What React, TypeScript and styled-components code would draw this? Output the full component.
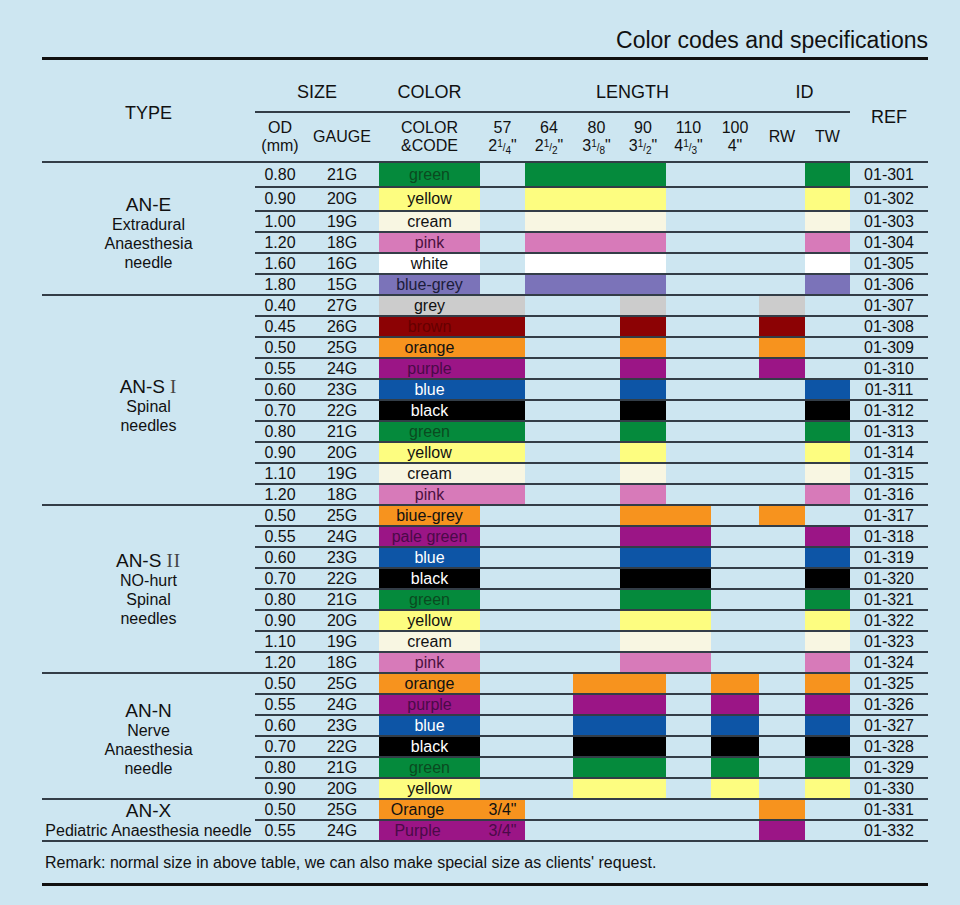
import React from 'react';
import styled, { createGlobalStyle } from 'styled-components';

const LINE = '#333d47';
const BG = '#cde6f1';
const COLS = '50px 74px 101px 45px 48px 47px 46px 45px 48px 46px 45px 78px';

const Global = createGlobalStyle`
  html, body { margin: 0; padding: 0; background: ${BG}; }
  body { font-family: "Liberation Sans", Arial, sans-serif; color: #111; }
`;

const Page = styled.div`
  width: 960px;
  height: 905px;
  box-sizing: border-box;
  padding: 0 32px 0 42px;
  background: ${BG};
`;

const Title = styled.h1`
  margin: 0;
  padding: 28px 0 5px;
  font-size: 23px;
  line-height: 24px;
  font-weight: normal;
  text-align: right;
  border-bottom: 3px solid #111;
`;

const Head = styled.div`
  display: grid;
  grid-template-columns: 213px ${COLS};
  grid-template-rows: 53px 48px;
`;

const TypeHead = styled.div`
  grid-column: 1;
  grid-row: 1 / 3;
  display: flex;
  align-items: center;
  justify-content: center;
  padding-top: 6px;
  font-size: 18px;
`;

const RefHead = styled.div`
  grid-column: 13;
  grid-row: 1 / 3;
  display: flex;
  align-items: center;
  justify-content: center;
  padding-top: 14px;
  font-size: 18px;
`;

const GroupHead = styled.div<{ $from: number; $to: number; $pl?: number }>`
  grid-row: 1;
  grid-column: ${(p) => p.$from} / ${(p) => p.$to};
  border-bottom: 2px solid ${LINE};
  display: flex;
  align-items: flex-end;
  justify-content: center;
  padding-bottom: 9px;
  padding-left: ${(p) => p.$pl || 0}px;
  font-size: 18px;
  line-height: 20px;
`;

const SubHead = styled.div<{ $col: number }>`
  grid-row: 2;
  grid-column: ${(p) => p.$col};
  display: flex;
  flex-direction: column;
  align-items: center;
  justify-content: center;
  font-size: 16px;
  line-height: 18px;
  text-align: center;
  white-space: nowrap;
`;

const Frac = styled.span`
  font-size: 10px;
  line-height: 0;
  & sup, & sub { font-size: 10px; line-height: 0; }
`;

const Table = styled.div`
  border-bottom: 2px solid ${LINE};
`;

const Group = styled.div`
  display: flex;
  border-top: 2px solid ${LINE};
`;

const TypeCell = styled.div<{ $shift: number }>`
  width: 213px;
  flex: none;
  display: flex;
  flex-direction: column;
  align-items: center;
  justify-content: center;
  text-align: center;
  padding-top: ${(p) => p.$shift}px;
  box-sizing: border-box;
`;

const TypeMain = styled.div`
  font-size: 19px;
  line-height: 21px;
`;

const TypeSub = styled.div`
  font-size: 16px;
  line-height: 19px;
  white-space: nowrap;
`;

const Roman = styled.span`
  font-family: "Liberation Serif", "Times New Roman", serif;
  font-size: 19px;
  color: #444;
  margin-left: 5px;
  letter-spacing: 1px;
`;

const Rows = styled.div`
  flex: 1;
  display: flex;
  flex-direction: column;
`;

const Row = styled.div<{ $h: number }>`
  display: grid;
  grid-template-columns: ${COLS};
  height: ${(p) => p.$h}px;
  border-top: 2px solid ${LINE};
  &:first-child { border-top: none; }
`;

const Cell = styled.div<{ $bg?: string; $fg?: string; $pr?: number }>`
  display: flex;
  align-items: center;
  justify-content: center;
  background: ${(p) => p.$bg || 'transparent'};
  color: ${(p) => p.$fg || '#111'};
  font-size: 16px;
  line-height: 1;
  padding-right: ${(p) => p.$pr || 0}px;
  white-space: nowrap;
`;

const Remark = styled.div`
  padding: 12px 0 0 3px;
  font-size: 16px;
  line-height: 18px;
  height: 29px;
  border-bottom: 3px solid #111;
`;

type Fill = { bg: string; fg: string };
const C: Record<string, Fill> = {
  green: { bg: '#058a3c', fg: '#0a4a20' },
  yellow: { bg: '#fdfd80', fg: '#111' },
  cream: { bg: '#f8f6e2', fg: '#111' },
  pink: { bg: '#d77ab9', fg: '#4a1040' },
  white: { bg: '#ffffff', fg: '#111' },
  bluegrey: { bg: '#7b73b9', fg: '#1c1c3a' },
  grey: { bg: '#cccccc', fg: '#111' },
  brown: { bg: '#8c0204', fg: '#650000' },
  orange: { bg: '#f7931e', fg: '#111' },
  purple: { bg: '#9b1586', fg: '#4a0a48' },
  blue: { bg: '#0d55a6', fg: '#ffffff' },
  black: { bg: '#000000', fg: '#ffffff' },
};

type RowData = {
  od: string;
  g: string;
  name: string;
  c: string;
  ref: string;
  fill: number[];
  h?: number;
  extra?: string;
};

type GroupData = {
  main: React.ReactNode;
  sub: string[];
  shift: number;
  rows: RowData[];
};

const E = [3, 5, 6, 7, 11];
const S1a = [3, 4, 7, 10];
const S1b = [3, 4, 7, 11];
const S2a = [3, 7, 8, 10];
const S2b = [3, 7, 8, 11];
const N = [3, 6, 7, 9, 11];
const X = [3, 4, 10];

const groups: GroupData[] = [
  {
    main: 'AN-E',
    sub: ['Extradural', 'Anaesthesia', 'needle'],
    shift: 8,
    rows: [
      { od: '0.80', g: '21G', name: 'green', c: 'green', ref: '01-301', fill: E, h: 23 },
      { od: '0.90', g: '20G', name: 'yellow', c: 'yellow', ref: '01-302', fill: E, h: 22 },
      { od: '1.00', g: '19G', name: 'cream', c: 'cream', ref: '01-303', fill: E },
      { od: '1.20', g: '18G', name: 'pink', c: 'pink', ref: '01-304', fill: E },
      { od: '1.60', g: '16G', name: 'white', c: 'white', ref: '01-305', fill: E },
      { od: '1.80', g: '15G', name: 'blue-grey', c: 'bluegrey', ref: '01-306', fill: E },
    ],
  },
  {
    main: (
      <>
        AN-S<Roman>I</Roman>
      </>
    ),
    sub: ['Spinal', 'needles'],
    shift: 10,
    rows: [
      { od: '0.40', g: '27G', name: 'grey', c: 'grey', ref: '01-307', fill: S1a },
      { od: '0.45', g: '26G', name: 'brown', c: 'brown', ref: '01-308', fill: S1a },
      { od: '0.50', g: '25G', name: 'orange', c: 'orange', ref: '01-309', fill: S1a },
      { od: '0.55', g: '24G', name: 'purple', c: 'purple', ref: '01-310', fill: S1a },
      { od: '0.60', g: '23G', name: 'blue', c: 'blue', ref: '01-311', fill: S1b },
      { od: '0.70', g: '22G', name: 'black', c: 'black', ref: '01-312', fill: S1b },
      { od: '0.80', g: '21G', name: 'green', c: 'green', ref: '01-313', fill: S1b },
      { od: '0.90', g: '20G', name: 'yellow', c: 'yellow', ref: '01-314', fill: S1b },
      { od: '1.10', g: '19G', name: 'cream', c: 'cream', ref: '01-315', fill: S1b },
      { od: '1.20', g: '18G', name: 'pink', c: 'pink', ref: '01-316', fill: S1b },
    ],
  },
  {
    main: (
      <>
        AN-S<Roman>II</Roman>
      </>
    ),
    sub: ['NO-hurt', 'Spinal', 'needles'],
    shift: 0,
    rows: [
      { od: '0.50', g: '25G', name: 'biue-grey', c: 'orange', ref: '01-317', fill: S2a },
      { od: '0.55', g: '24G', name: 'pale green', c: 'purple', ref: '01-318', fill: S2b },
      { od: '0.60', g: '23G', name: 'blue', c: 'blue', ref: '01-319', fill: S2b },
      { od: '0.70', g: '22G', name: 'black', c: 'black', ref: '01-320', fill: S2b },
      { od: '0.80', g: '21G', name: 'green', c: 'green', ref: '01-321', fill: S2b },
      { od: '0.90', g: '20G', name: 'yellow', c: 'yellow', ref: '01-322', fill: S2b },
      { od: '1.10', g: '19G', name: 'cream', c: 'cream', ref: '01-323', fill: S2b },
      { od: '1.20', g: '18G', name: 'pink', c: 'pink', ref: '01-324', fill: S2b },
    ],
  },
  {
    main: 'AN-N',
    sub: ['Nerve', 'Anaesthesia', 'needle'],
    shift: 6,
    rows: [
      { od: '0.50', g: '25G', name: 'orange', c: 'orange', ref: '01-325', fill: N },
      { od: '0.55', g: '24G', name: 'purple', c: 'purple', ref: '01-326', fill: N },
      { od: '0.60', g: '23G', name: 'blue', c: 'blue', ref: '01-327', fill: N },
      { od: '0.70', g: '22G', name: 'black', c: 'black', ref: '01-328', fill: N },
      { od: '0.80', g: '21G', name: 'green', c: 'green', ref: '01-329', fill: N },
      { od: '0.90', g: '20G', name: 'yellow', c: 'yellow', ref: '01-330', fill: N },
    ],
  },
  {
    main: 'AN-X',
    sub: ['Pediatric Anaesthesia needle'],
    shift: 0,
    rows: [
      { od: '0.50', g: '25G', name: 'Orange', c: 'orange', ref: '01-331', fill: X, extra: '3/4"' },
      { od: '0.55', g: '24G', name: 'Purple', c: 'purple', ref: '01-332', fill: X, extra: '3/4"' },
    ],
  },
];

const F = ({ w, n, d }: { w: string; n: string; d: string }) => (
  <span>
    {w}
    <Frac>
      <sup>{n}</sup>/<sub>{d}</sub>
    </Frac>
    "
  </span>
);

const lengths: { mm: string; inch: React.ReactNode }[] = [
  { mm: '57', inch: <F w="2" n="1" d="4" /> },
  { mm: '64', inch: <F w="2" n="1" d="2" /> },
  { mm: '80', inch: <F w="3" n="1" d="8" /> },
  { mm: '90', inch: <F w="3" n="1" d="2" /> },
  { mm: '110', inch: <F w="4" n="1" d="3" /> },
  { mm: '100', inch: <span>4"</span> },
];

function DataRow({ r }: { r: RowData }) {
  const fill = C[r.c];
  const cols = [3, 4, 5, 6, 7, 8, 9, 10, 11];
  return (
    <Row $h={r.h || 19}>
      <Cell>{r.od}</Cell>
      <Cell>{r.g}</Cell>
      {cols.map((col) => {
        const on = r.fill.includes(col);
        let content: React.ReactNode = null;
        if (col === 3) content = r.name;
        if (col === 4 && r.extra) content = r.extra;
        return (
          <Cell
            key={col}
            $bg={on ? fill.bg : undefined}
            $fg={on ? fill.fg : undefined}
            $pr={col === 3 && r.extra ? 24 : 0}
          >
            {content}
          </Cell>
        );
      })}
      <Cell>{r.ref}</Cell>
    </Row>
  );
}

export default function App() {
  return (
    <Page>
      <Global />
      <Title>Color codes and specifications</Title>
      <Head>
        <TypeHead>TYPE</TypeHead>
        <GroupHead $from={2} $to={4}>SIZE</GroupHead>
        <GroupHead $from={4} $to={5}>COLOR</GroupHead>
        <GroupHead $from={5} $to={11} $pl={26}>LENGTH</GroupHead>
        <GroupHead $from={11} $to={13}>ID</GroupHead>
        <RefHead>REF</RefHead>
        <SubHead $col={2}>
          <span>OD</span>
          <span>(mm)</span>
        </SubHead>
        <SubHead $col={3}>GAUGE</SubHead>
        <SubHead $col={4}>
          <span>COLOR</span>
          <span>&amp;CODE</span>
        </SubHead>
        {lengths.map((l, i) => (
          <SubHead key={l.mm} $col={5 + i}>
            <span>{l.mm}</span>
            {l.inch}
          </SubHead>
        ))}
        <SubHead $col={11}>RW</SubHead>
        <SubHead $col={12}>TW</SubHead>
      </Head>
      <Table>
        {groups.map((g, gi) => (
          <Group key={gi}>
            <TypeCell $shift={g.shift}>
              <TypeMain>{g.main}</TypeMain>
              {g.sub.map((s) => (
                <TypeSub key={s}>{s}</TypeSub>
              ))}
            </TypeCell>
            <Rows>
              {g.rows.map((r) => (
                <DataRow key={r.ref} r={r} />
              ))}
            </Rows>
          </Group>
        ))}
      </Table>
      <Remark>Remark: normal size in above table, we can also make special size as clients' request.</Remark>
    </Page>
  );
}
